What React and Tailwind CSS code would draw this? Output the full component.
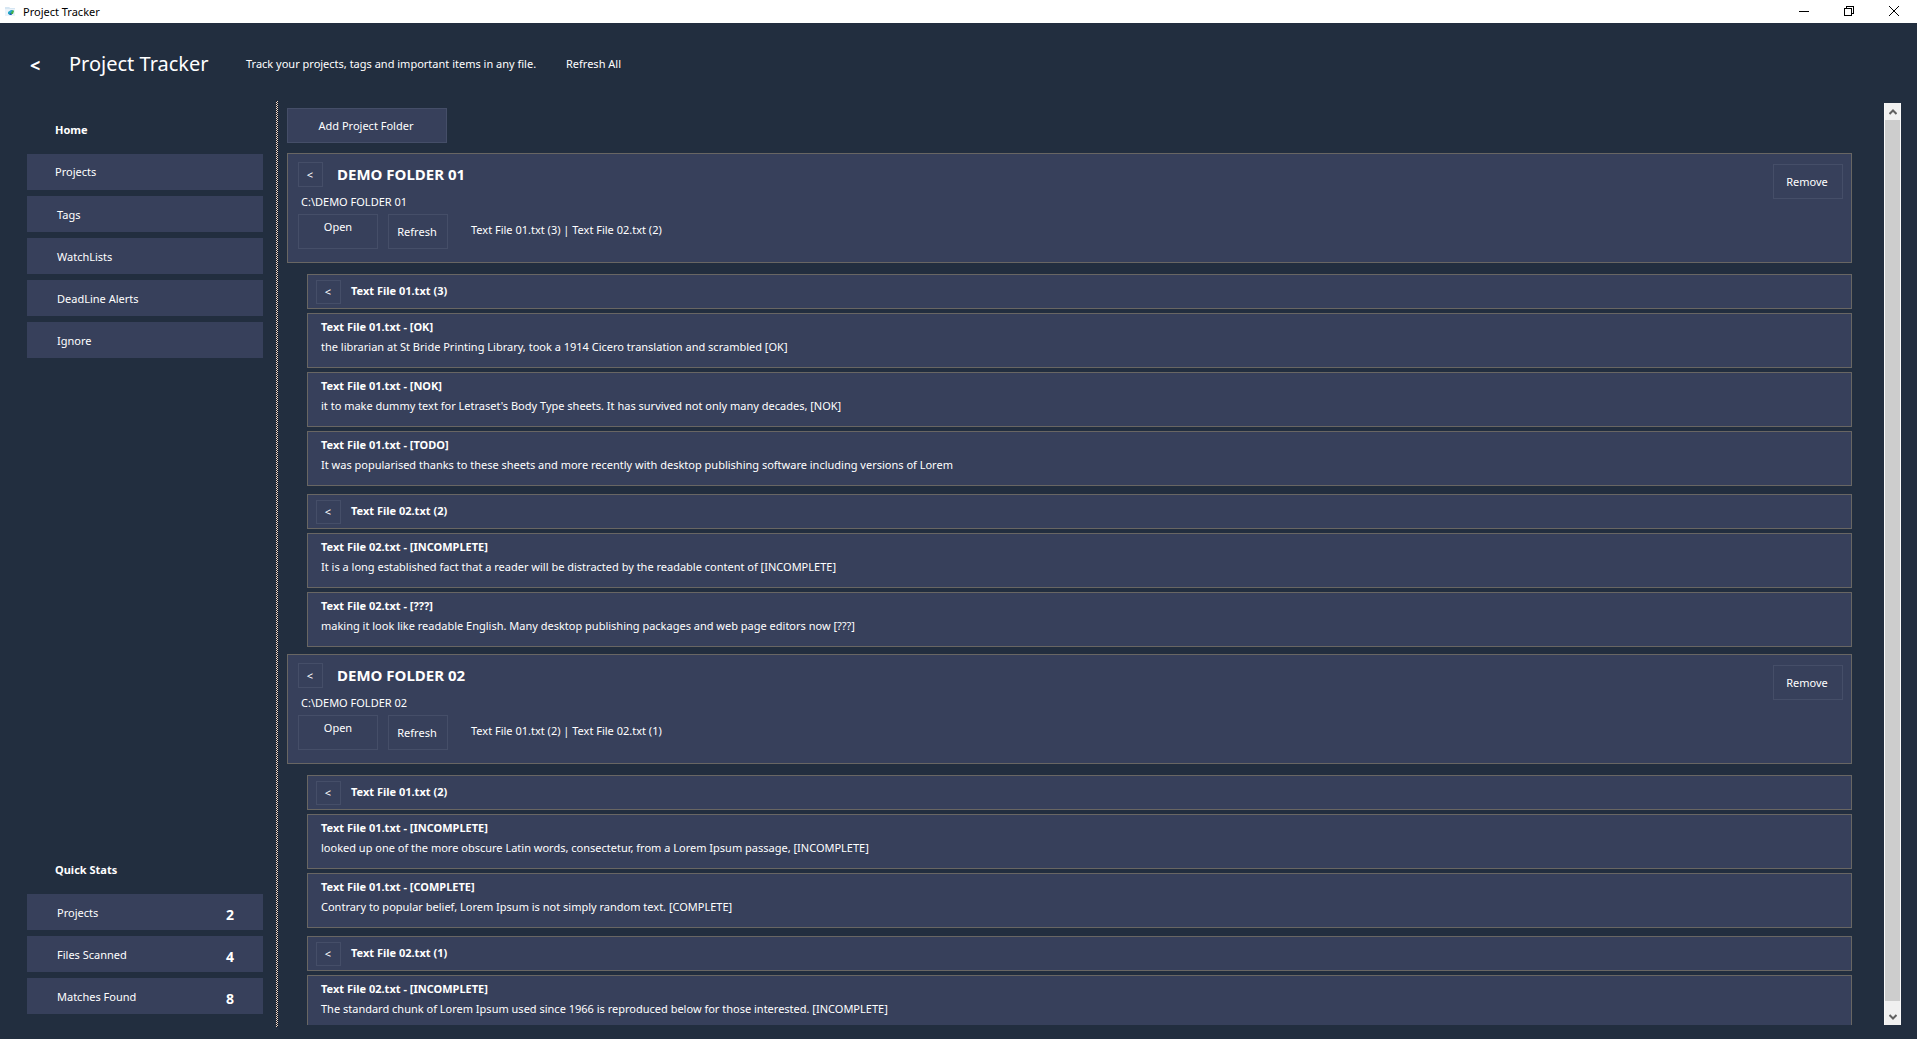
const navItems = ["Projects", "Tags", "WatchLists", "DeadLine Alerts", "Ignore"];

const stats = [
  { label: "Projects", value: 2 },
  { label: "Files Scanned", value: 4 },
  { label: "Matches Found", value: 8 },
];

const folders = [
  {
    name: "DEMO FOLDER 01",
    files: [
      {
        name: "Text File 01.txt",
        matches: [
          { tag: "[OK]", text: "the librarian at St Bride Printing Library, took a 1914 Cicero translation and scrambled [OK]" },
          { tag: "[NOK]", text: "it to make dummy text for Letraset's Body Type sheets. It has survived not only many decades, [NOK]" },
          { tag: "[TODO]", text: "It was popularised thanks to these sheets and more recently with desktop publishing software including versions of Lorem" },
        ],
      },
      {
        name: "Text File 02.txt",
        matches: [
          { tag: "[INCOMPLETE]", text: "It is a long established fact that a reader will be distracted by the readable content of [INCOMPLETE]" },
          { tag: "[???]", text: "making it look like readable English. Many desktop publishing packages and web page editors now [???]" },
        ],
      },
    ],
  },
  {
    name: "DEMO FOLDER 02",
    files: [
      {
        name: "Text File 01.txt",
        matches: [
          { tag: "[INCOMPLETE]", text: "looked up one of the more obscure Latin words, consectetur, from a Lorem Ipsum passage, [INCOMPLETE]" },
          { tag: "[COMPLETE]", text: "Contrary to popular belief, Lorem Ipsum is not simply random text. [COMPLETE]" },
        ],
      },
      {
        name: "Text File 02.txt",
        matches: [
          { tag: "[INCOMPLETE]", text: "The standard chunk of Lorem Ipsum used since 1966 is reproduced below for those interested. [INCOMPLETE]" },
        ],
      },
    ],
  },
];

function TitleBar() {
  return (
    <div className="flex h-[23px] shrink-0 items-center bg-white pl-1 text-black">
      <svg width="12" height="12" viewBox="0 0 12 12" aria-hidden="true">
        <path d="M1 1h4l1 1h5v8H1z" fill="#eaf3fa" />
        <path d="M1 1h4l1 1h5v1H1z" fill="#d5e6f3" />
        <path d="M4 6l3-2 2 0-2 5-3-1z" fill="#27a8c9" />
        <path d="M6 8l3-4 1 1-1 3z" fill="#3fae49" />
        <path d="M5 8l2-1 1 2H6z" fill="#1f5fb5" />
      </svg>
      <span className="ml-[7px] pt-px">Project Tracker</span>
      <div className="ml-auto flex h-full pr-px">
        <button aria-label="Minimize" className="flex w-[45px] items-center justify-center">
          <svg width="10" height="10" viewBox="0 0 10 10" stroke="#000" shapeRendering="crispEdges">
            <path d="M0 4.500h10" />
          </svg>
        </button>
        <button aria-label="Restore" className="flex w-[45px] items-center justify-center pb-[2px]">
          <svg width="10" height="10" viewBox="0 0 10 10" fill="none" stroke="#000" shapeRendering="crispEdges">
            <path d="M0.500 2.500h7v7h-7z" />
            <path d="M2.500 2.500v-2h7v7h-2" />
          </svg>
        </button>
        <button aria-label="Close" className="flex w-[45px] items-center justify-center pb-[2px]">
          <svg width="10" height="10" viewBox="0 0 10 10" stroke="#000">
            <path d="M0 0l10 10M10 0L0 10" />
          </svg>
        </button>
      </div>
    </div>
  );
}

function Header() {
  return (
    <header className="flex h-[78px] shrink-0 items-center pt-1 pl-[30px]">
      <button aria-label="Collapse menu" className="w-[39px] pt-[2px] text-left text-[18px] font-bold">&lt;</button>
      <h1 className="w-[177px] text-[20px] whitespace-nowrap">Project Tracker</h1>
      <p className="w-[320px] whitespace-nowrap">Track your projects, tags and important items in any file.</p>
      <button className="pt-px">Refresh All</button>
    </header>
  );
}

function Sidebar() {
  return (
    <aside className="flex w-[276px] shrink-0 flex-col pr-[13px] pb-[13px] pl-[27px]">
      <h2 className="mt-[17px] mb-3 pl-7 leading-6 font-bold">Home</h2>
      <nav className="flex flex-col gap-[6px]">
        {navItems.map((item) => (
          <button key={item} className="h-9 bg-[#37405b] pt-[2px] pl-[30px] text-left first:pt-0 first:pl-7">{item}</button>
        ))}
      </nav>
      <h2 className="mt-auto mb-3 pl-7 leading-6 font-bold">Quick Stats</h2>
      <dl className="flex flex-col gap-[6px]">
        {stats.map((s) => (
          <div key={s.label} className="flex h-9 items-center justify-between bg-[#37405b] pt-[2px] pr-[29px] pl-[30px]">
            <dt>{s.label}</dt>
            <dd className="pt-[3px] text-[14px] font-bold">{s.value}</dd>
          </div>
        ))}
      </dl>
    </aside>
  );
}

function Divider() {
  return (
    <div className="mr-[9px] w-[2px] shrink-0 bg-[repeating-conic-gradient(#f0dfcf_0_25%,#1c1820_0_50%)] bg-[length:2px_2px]" />
  );
}

function OutlineButton({ className, children, ...rest }) {
  return (
    <button className={`shrink-0 border border-[#454e68] bg-[#37405b] ${className}`} {...rest}>
      {children}
    </button>
  );
}

function FileGroup({ file }) {
  return (
    <section className="flex flex-col gap-1">
      <div className="flex h-[35px] items-center border border-[#686663] bg-[#37405b] pl-2">
        <OutlineButton aria-label={`Collapse ${file.name}`} className="h-6 w-[25px] pt-px pr-px">&lt;</OutlineButton>
        <h3 className="ml-[10px] font-bold">{file.name} ({file.matches.length})</h3>
      </div>
      {file.matches.map((m) => (
        <article key={m.tag} className="h-[55px] border border-[#686663] bg-[#37405b] pt-[3px] pl-[13px] leading-5 whitespace-nowrap">
          <h4 className="font-bold">{file.name} - {m.tag}</h4>
          <p>{m.text}</p>
        </article>
      ))}
    </section>
  );
}

function Folder({ folder }) {
  return (
    <section>
      <div className="flex h-[110px] items-start justify-between border border-[#686663] bg-[#37405b] pr-2 pl-[10px]">
        <div className="pt-2">
          <div className="flex items-center">
            <OutlineButton aria-label={`Collapse ${folder.name}`} className="h-[25px] w-[25px] pt-px pr-px">&lt;</OutlineButton>
            <h2 className="ml-[14px] text-[15px] font-bold">{folder.name}</h2>
          </div>
          <p className="mt-[5px] mb-[2px] pl-[3px] leading-5">C:\{folder.name}</p>
          <div className="flex items-center">
            <OutlineButton className="h-[35px] w-20 pb-2">Open</OutlineButton>
            <OutlineButton className="ml-[10px] h-[35px] w-[60px] pt-[2px] pr-[2px]">Refresh</OutlineButton>
            <p className="ml-[23px] pb-[2px]">
              {folder.files.map((f) => `${f.name} (${f.matches.length})`).join(" | ")}
            </p>
          </div>
        </div>
        <OutlineButton className="mt-[10px] h-[35px] w-[70px] pt-[2px] pr-[2px]">Remove</OutlineButton>
      </div>
      <div className="mt-[11px] ml-5 flex flex-col gap-2">
        {folder.files.map((f) => (
          <FileGroup key={f.name} file={f} />
        ))}
      </div>
    </section>
  );
}

function ScrollBar() {
  return (
    <div className="mt-[2px] mr-4 ml-8 flex w-[17px] shrink-0 flex-col border-x border-[#fafafa] bg-[#f0f0f0]">
      <button aria-label="Scroll up" className="flex h-[17px] items-center justify-center">
        <svg width="8" height="6" viewBox="0 0 8 6" fill="none" stroke="#606060" strokeWidth="2">
          <path d="M0.500 5L4 1.500L7.500 5" />
        </svg>
      </button>
      <div className="grow bg-[#cdcdcd]" />
      <button aria-label="Scroll down" className="flex h-6 items-end justify-center pb-[5px]">
        <svg width="8" height="6" viewBox="0 0 8 6" fill="none" stroke="#606060" strokeWidth="2">
          <path d="M0.500 1L4 4.500L7.500 1" />
        </svg>
      </button>
    </div>
  );
}

export default function App() {
  return (
    <div className="flex h-screen flex-col overflow-hidden bg-[#222e3f] font-['Noto_Sans',sans-serif] text-[11px] text-white">
      <TitleBar />
      <Header />
      <div className="mb-3 flex min-h-0 grow">
        <Sidebar />
        <Divider />
        <div className="mb-[2px] flex min-w-0 grow">
          <main className="min-w-0 grow overflow-hidden pt-[7px]">
            <OutlineButton className="h-[35px] w-40 pt-px pr-[2px]">Add Project Folder</OutlineButton>
            <div className="mt-[10px] flex flex-col gap-[7px]">
              {folders.map((f) => (
                <Folder key={f.name} folder={f} />
              ))}
            </div>
          </main>
          <ScrollBar />
        </div>
      </div>
    </div>
  );
}
